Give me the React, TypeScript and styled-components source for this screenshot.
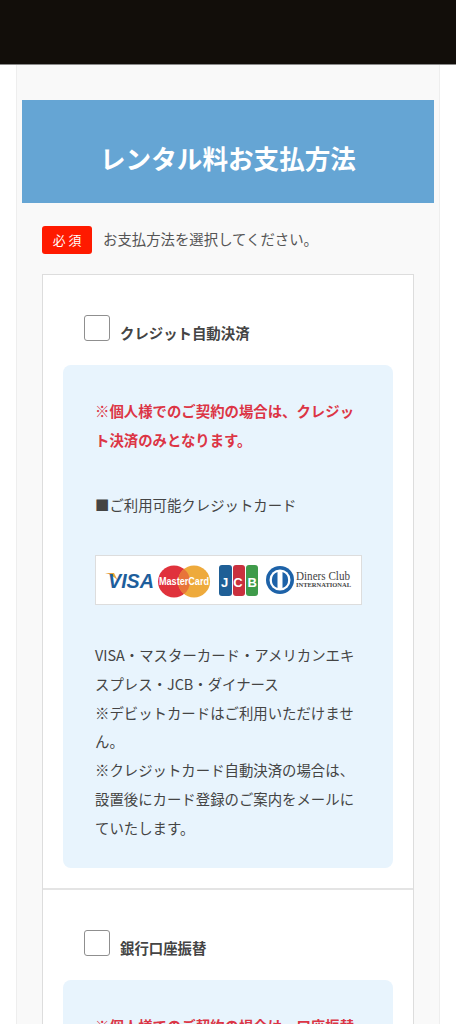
import React from "react";
import styled, { createGlobalStyle } from "styled-components";

const GlobalStyle = createGlobalStyle`
  html, body {
    margin: 0;
    padding: 0;
    background: #fff;
    height: 1024px;
    overflow: hidden;
  }
  * {
    box-sizing: border-box;
  }
  body {
    font-family: "Noto Sans CJK JP", "Noto Sans", sans-serif;
    color: #333;
  }
`;

const CardLogos = () => (
  <svg width="265" height="48" viewBox="0 0 265 48">
    {/* VISA */}
    <path d="M9 17 L18 17 L22 25 C19 21 14 18 9 17Z" fill="#e9a33a" />
    <text x="12" y="32" fontFamily="Liberation Sans" fontSize="20" fontWeight="700" fontStyle="italic" fill="#1d5e9c" textLength="46" lengthAdjust="spacingAndGlyphs">VISA</text>
    {/* MasterCard */}
    <circle cx="78" cy="25.5" r="16" fill="#e0323c" />
    <circle cx="98" cy="25.5" r="16" fill="#eeaa3c" />
    <path d="M88 13 A16 16 0 0 1 88 38 A16 16 0 0 1 88 13Z" fill="#e8743a" />
    <text x="63" y="29" fontFamily="Liberation Sans" fontSize="10" fontWeight="700" fill="#fff" textLength="50" lengthAdjust="spacingAndGlyphs">MasterCard</text>
    {/* JCB */}
    <rect x="123" y="9" width="13" height="31" rx="3" fill="#1f5f96" />
    <rect x="137" y="9" width="12" height="31" rx="3" fill="#c9303e" />
    <rect x="150" y="9" width="12" height="31" rx="3" fill="#3f9b4a" />
    <text x="125" y="31" fontFamily="Liberation Sans" fontSize="13" fontWeight="700" fill="#fff" textLength="36" lengthAdjust="spacing">JCB</text>
    {/* Diners */}
    <circle cx="184" cy="24" r="14" fill="#1d62a8" />
    <circle cx="184" cy="24" r="10.5" fill="#fff" />
    <path d="M181.5 16 A8.5 8.5 0 0 0 181.5 32Z M186.5 16 A8.5 8.5 0 0 1 186.5 32Z" fill="#1d62a8" />
    <text x="200" y="24" fontFamily="Liberation Serif" fontSize="12.5" fill="#444" textLength="54" lengthAdjust="spacingAndGlyphs">Diners Club</text>
    <text x="200" y="31" fontFamily="Liberation Serif" fontSize="6" fontWeight="700" fill="#444" textLength="55" lengthAdjust="spacingAndGlyphs">INTERNATIONAL</text>
  </svg>
);

const PaymentRow = ({
  label,
  children,
  last,
}: {
  label: string;
  children: React.ReactNode;
  last?: boolean;
}) => (
  <Row $last={last}>
    <CheckLine>
      <CheckBox />
      <CheckLabel>{label}</CheckLabel>
    </CheckLine>
    <InfoBox>{children}</InfoBox>
  </Row>
);

const App: React.FC = () => {
  return (
    <>
      <GlobalStyle />
      <TopBar />
      <Page>
        <SectionTitle>レンタル料お支払方法</SectionTitle>
        <Field>
          <RequiredLine>
            <RequiredTag>必 須</RequiredTag>
            <RequiredText>お支払方法を選択してください。</RequiredText>
          </RequiredLine>
          <Card>
            <PaymentRow label="クレジット自動決済">
              <Notice>※個人様でのご契約の場合は、クレジット決済のみとなります。</Notice>
              <SubHeading>■ご利用可能クレジットカード</SubHeading>
              <LogoFrame>
                <CardLogos />
              </LogoFrame>
              <Body>
                VISA・マスターカード・アメリカンエキスプレス・JCB・ダイナース
                <br />
                ※デビットカードはご利用いただけません。
                <br />
                ※クレジットカード自動決済の場合は、設置後にカード登録のご案内をメールにていたします。
              </Body>
            </PaymentRow>
            <PaymentRow label="銀行口座振替" last>
              <Notice>※個人様でのご契約の場合は、口座振替</Notice>
            </PaymentRow>
          </Card>
        </Field>
      </Page>
    </>
  );
};

const TopBar = styled.div`
  height: 65px;
  background: #120e0a;
  border-bottom: 1px solid #8a8a8a;
`;

const Page = styled.div`
  margin: 0 16px;
  padding: 35px 5px 40px;
  background: #f9f9f9;
  border-left: 1px solid #eee;
  border-right: 1px solid #eee;
`;

const SectionTitle = styled.h2`
  margin: 0;
  height: 103px;
  padding-top: 36px;
  background: #65a5d4;
  color: #fff;
  font-size: 25.6px;
  line-height: 44px;
  font-weight: 700;
  text-align: center;
`;

const Field = styled.div`
  padding: 23px 20px 0;
`;

const RequiredLine = styled.div`
  display: flex;
  align-items: center;
  gap: 11px;
  height: 28px;
`;

const RequiredTag = styled.span`
  width: 50px;
  height: 28px;
  background: #ff1a00;
  border-radius: 3px;
  color: #fff;
  font-size: 12.8px;
  line-height: 28px;
  text-align: center;
`;

const RequiredText = styled.span`
  padding-bottom: 4px;
  font-size: 14.4px;
  color: #555;
`;

const Card = styled.div`
  margin-top: 20px;
  background: #fff;
  border: 1px solid #ddd;
`;

const Row = styled.div<{ $last?: boolean }>`
  padding: 40px 20px 20px;
  border-bottom: ${(props) => (props.$last ? "none" : "2px solid #e4e4e4")};
`;

const CheckLine = styled.div`
  display: flex;
  align-items: flex-end;
  gap: 10px;
  padding-left: 21px;
  height: 30px;
`;

const CheckBox = styled.span`
  width: 26px;
  height: 26px;
  margin-bottom: 4px;
  background: #fff;
  border: 1px solid #8f8f8f;
  border-radius: 3px;
`;

const CheckLabel = styled.span`
  font-size: 14.4px;
  line-height: 24px;
  font-weight: 700;
  color: #444;
`;

const InfoBox = styled.div`
  margin-top: 20px;
  padding: 31px 32px 25px;
  background: #e8f4fd;
  border-radius: 8px;
`;

const Notice = styled.p`
  margin: 0;
  font-size: 14.4px;
  line-height: 29px;
  font-weight: 700;
  color: #dc3545;
`;

const SubHeading = styled.p`
  margin: 36px 0 0;
  font-size: 14.4px;
  line-height: 29px;
  color: #444;
`;

const LogoFrame = styled.div`
  display: flex;
  margin-top: 36px;
  width: 267px;
  height: 50px;
  background: #fff;
  border: 1px solid #ddd;
`;

const Body = styled.p`
  margin: 36px 0 0;
  font-size: 14.4px;
  line-height: 28.8px;
  color: #444;
`;

export default App;
